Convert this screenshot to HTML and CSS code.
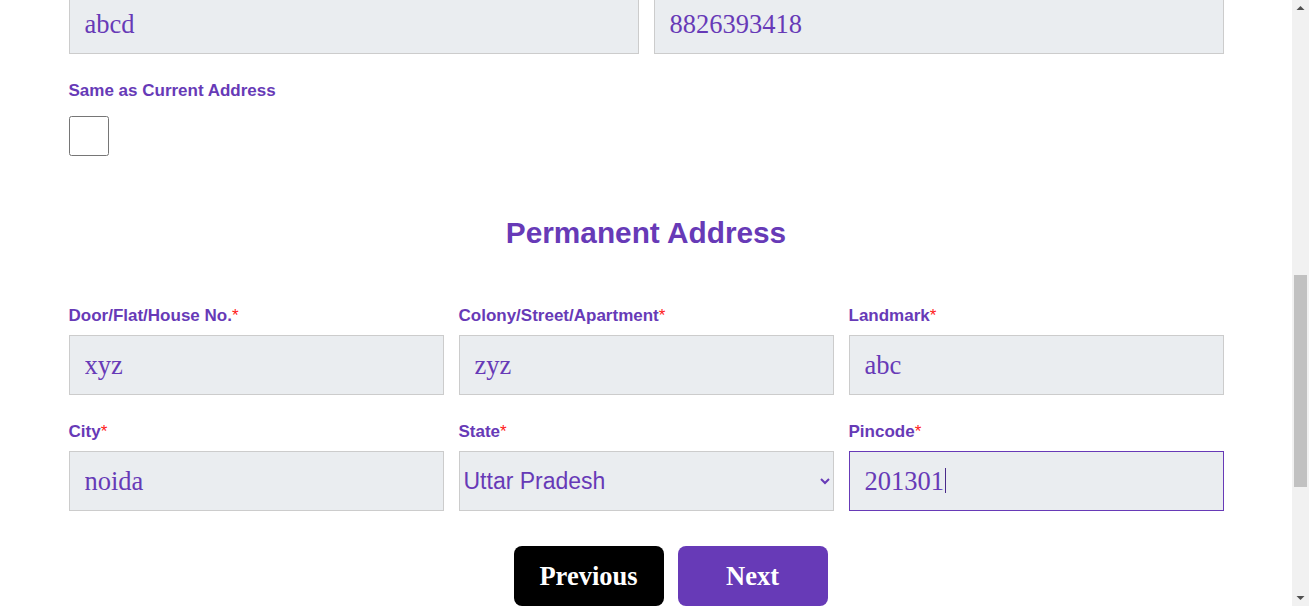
FILE: index.html
```html
<!DOCTYPE html>
<html lang="en">
<head>
<meta charset="utf-8">
<title>Permanent Address</title>
<link rel="stylesheet" href="styles.css">
</head>
<body>
<div class="page">
  <main class="main">
    <form class="form">
      <div class="row row-2">
        <div class="field"><input class="input" type="text" value="abcd"></div>
        <div class="field"><input class="input" type="text" value="8826393418"></div>
      </div>

      <div class="same">
        <label class="label" for="same">Same as Current Address</label>
        <input class="check" id="same" type="checkbox">
      </div>

      <h2 class="heading">Permanent Address</h2>

      <div class="row row-3">
        <div class="field">
          <label class="label">Door/Flat/House No.<span class="req">*</span></label>
          <input class="input" type="text" value="xyz">
        </div>
        <div class="field">
          <label class="label">Colony/Street/Apartment<span class="req">*</span></label>
          <input class="input" type="text" value="zyz">
        </div>
        <div class="field">
          <label class="label">Landmark<span class="req">*</span></label>
          <input class="input" type="text" value="abc">
        </div>
      </div>

      <div class="row row-3 row-gap">
        <div class="field">
          <label class="label">City<span class="req">*</span></label>
          <input class="input" type="text" value="noida">
        </div>
        <div class="field">
          <label class="label">State<span class="req">*</span></label>
          <select class="input select">
            <option>Uttar Pradesh</option>
          </select>
        </div>
        <div class="field">
          <label class="label">Pincode<span class="req">*</span></label>
          <div class="focus-wrap">
            <input class="input input-focus" type="text" value="201301">
            <span class="caret"></span>
          </div>
        </div>
      </div>

      <div class="actions">
        <button class="btn btn-prev" type="button">Previous</button>
        <button class="btn btn-next" type="button">Next</button>
      </div>
    </form>
  </main>
  <div class="scrollbar">
    <div class="sb-btn">
      <svg width="17" height="17" viewBox="0 0 17 17"><path d="M4.5 10 L8.5 6 L12.5 10 Z" fill="#505050"/></svg>
    </div>
    <div class="sb-track"><div class="sb-thumb"></div></div>
    <div class="sb-btn">
      <svg width="17" height="17" viewBox="0 0 17 17"><path d="M4.5 7 L12.5 7 L8.5 11 Z" fill="#505050"/></svg>
    </div>
  </div>
</div>
</body>
</html>
```

FILE: styles.css
```css
html, body {
  margin: 0;
  padding: 0;
  background: #ffffff;
}

.page {
  display: flex;
  height: 606px;
  overflow: hidden;
}

.main {
  flex: 1;
  min-width: 0;
}

.form {
  width: 1155px;
  margin: -6px auto 0;
}

.row {
  display: grid;
  column-gap: 15px;
}

.row-2 {
  grid-template-columns: 1fr 1fr;
}

.row-3 {
  grid-template-columns: 1fr 1fr 1fr;
}

.row-gap {
  margin-top: 26px;
}

.field {
  display: flex;
  flex-direction: column;
  min-width: 0;
}

.label {
  display: block;
  font-family: "Liberation Sans", Arial, sans-serif;
  font-weight: bold;
  font-size: 17px;
  line-height: 20px;
  color: #673ab7;
  padding-top: 1px;
  margin-bottom: 9px;
}

.req {
  color: #ff1a1a;
  font-weight: normal;
}

.input {
  box-sizing: border-box;
  width: 100%;
  height: 60px;
  margin: 0;
  padding: 0 15px;
  border: 1px solid #cccccc;
  background: #eaedf0;
  color: #673ab7;
  font-family: "Liberation Serif", "Times New Roman", serif;
  font-size: 26.5px;
  outline: none;
  border-radius: 0;
}

.select {
  padding: 0;
  font-family: "Liberation Sans", Arial, sans-serif;
  font-size: 23px;
}

.input-focus {
  border-color: #673ab7;
}

.focus-wrap {
  position: relative;
}

.caret {
  position: absolute;
  left: 96px;
  top: 17px;
  width: 1px;
  height: 25px;
  background: #4a2a8a;
}

.same {
  margin-top: 26px;
}

.same .label {
  margin-bottom: 15px;
}

.check {
  display: block;
  width: 40px;
  height: 40px;
  margin: 0;
}

.heading {
  margin: 60px 0 55px;
  text-align: center;
  font-family: "Liberation Sans", Arial, sans-serif;
  font-weight: bold;
  font-size: 29.8px;
  line-height: 34px;
  color: #673ab7;
}

.actions {
  display: flex;
  gap: 14px;
  margin-top: 35px;
  padding-left: 445px;
}

.btn {
  width: 150px;
  height: 60px;
  border: none;
  border-radius: 8px;
  color: #ffffff;
  font-family: "Liberation Serif", "Times New Roman", serif;
  font-weight: bold;
  font-size: 26.5px;
  padding: 0;
}

.btn-prev {
  background: #000000;
}

.btn-next {
  background: #673ab7;
}

.scrollbar {
  width: 17px;
  flex: 0 0 17px;
  display: flex;
  flex-direction: column;
  background: #f1f1f1;
}

.sb-btn {
  height: 17px;
  flex: 0 0 17px;
}

.sb-btn svg {
  display: block;
}

.sb-track {
  flex: 1;
  padding: 258px 2px 0;
}

.sb-thumb {
  height: 212px;
  background: #c1c1c1;
}
```
